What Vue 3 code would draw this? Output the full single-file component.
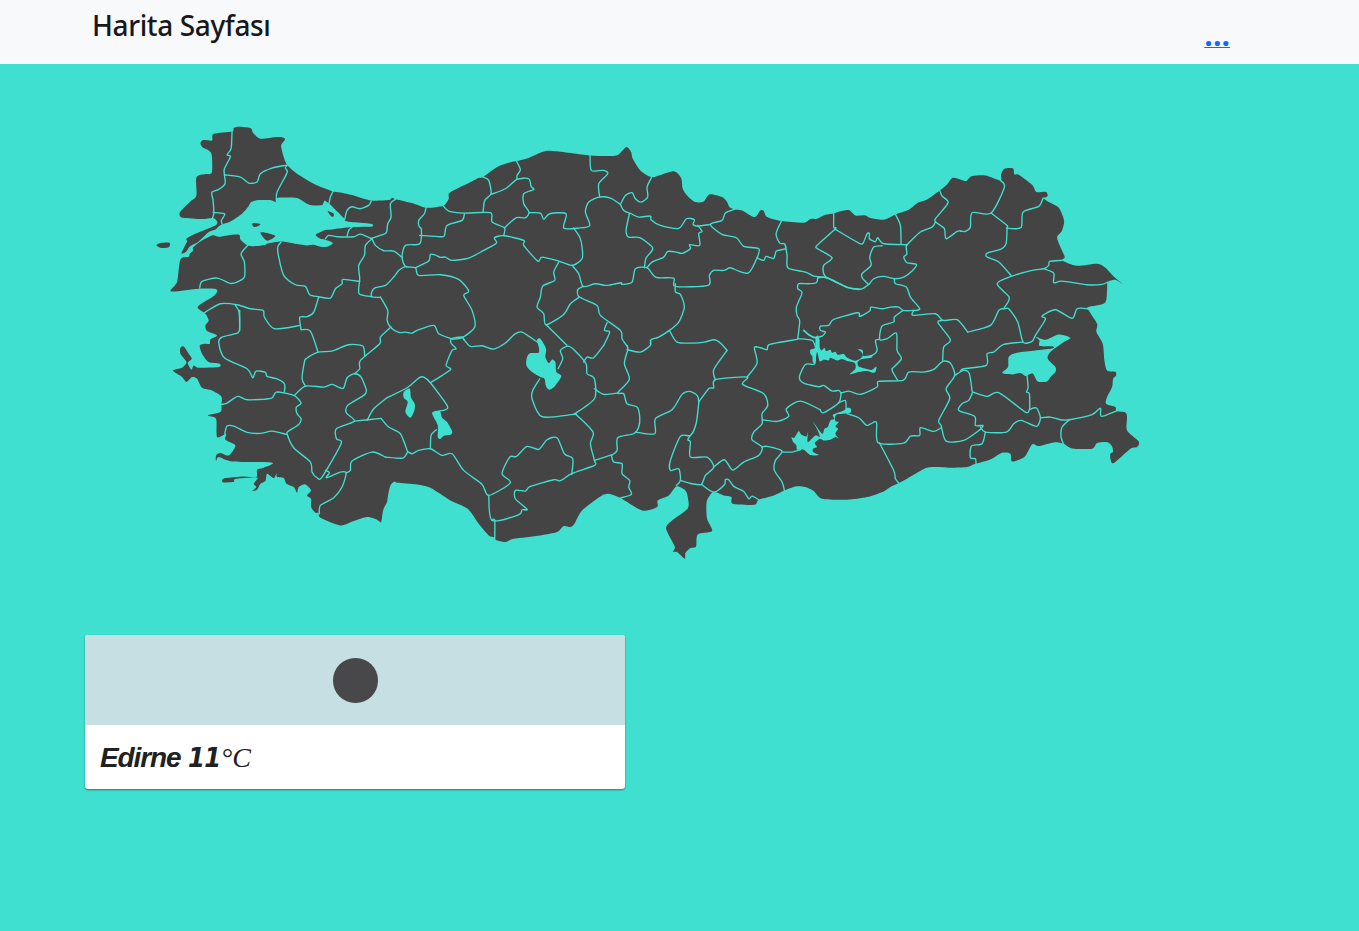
<script setup>
// Coordinates are stored per sheet: [originX, originY, "x y x y ..."] in thirds of a pixel.
const sheets = {
  a: [150, 115], b: [380, 130], c: [610, 130], d: [780, 150], e: [960, 150],
  f: [150, 310], g: [380, 310], h: [600, 310], i: [780, 320], j: [950, 310]
}

function points(key, text) {
  const [ox, oy] = sheets[key]
  const n = text.trim().split(/\s+/).map(Number)
  const out = []
  for (let k = 0; k < n.length; k += 2) out.push([ox + n[k] / 3, oy + n[k + 1] / 3])
  return out
}

function curve(pts, closed) {
  const t = 0.13
  const len = pts.length
  const at = (k) => (closed ? pts[(k + len) % len] : pts[Math.max(0, Math.min(len - 1, k))])
  const f = (v) => v.toFixed(2)
  let d = `M${f(pts[0][0])} ${f(pts[0][1])}`
  const end = closed ? len : len - 1
  for (let k = 0; k < end; k++) {
    const p0 = at(k - 1), p1 = at(k), p2 = at(k + 1), p3 = at(k + 2)
    d += `C${f(p1[0] + (p2[0] - p0[0]) * t)} ${f(p1[1] + (p2[1] - p0[1]) * t)} ${f(p2[0] - (p3[0] - p1[0]) * t)} ${f(p2[1] - (p3[1] - p1[1]) * t)} ${f(p2[0])} ${f(p2[1])}`
  }
  return closed ? d + 'Z' : d
}

const coast = [
  ['a', '245 48 250 38 265 34 300 38 308 52 330 70 380 65 402 68 402 76 392 90 400 125 410 148 440 175 490 205 520 218 547 228 570 231 610 240 662 255 715 254 725 247 735 252'],
  ['b', '48 207 95 218 137 232 188 226 205 205 208 187 265 158 295 143 308 140 350 110 385 97 408 92 440 84 490 63 520 62 627 75'],
  ['c', '0 77 25 72 48 50 62 65 67 85 90 120 123 140 155 132 192 123 212 142 217 175 230 195 255 215 280 213 297 192 335 200 350 215 357 230 372 237 395 240 432 260 450 240 460 242 470 260 513 272 580 277 600 266 620 265 645 253 670 249'],
  ['d', '175 184 205 179 225 195 255 195 270 203 310 208 345 192 385 178 412 157 440 147 478 120 500 102 518 82 555 92'],
  ['e', '20 90 35 77 75 75 120 90 122 72 132 55 158 54 162 72 175 73 215 103 228 125 255 124 262 133 258 140 248 143 265 155 295 172 311 210 305 240 290 260 298 285 313 320 305 330 350 346 410 340 435 352 460 378 487 401 465 388 442 395 440 420 433 458 383 470 385 480 410 520 408 545 427 580 432 630'],
  ['j', '470 180 495 184 497 195 488 205 485 230 470 260 467 280 495 290 498 302 525 306 530 320 530 360 565 393 560 410 540 415 490 458 480 445 480 430 488 425 485 408 470 395 440 398 425 415 365 414 340 400 310 396 265 407 245 402 222 440 185 453 180 430 155 427 120 447 75 460 50 470 0 472'],
  ['i', '455 440 430 446 380 475 355 488 330 500 310 513 260 530 200 538 125 535 100 512 75 500 45 498 12 510'],
  ['h', '520 555 475 568 462 583 397 580 393 560 370 555 340 544 325 560 318 580 320 625 335 662 292 672 287 708 270 713 255 728 253 745 230 725 218 724 223 708 197 654 215 630 262 594 262 560 255 540 228 528 205 555 172 570 170 590 125 600 60 563 25 550 0 555'],
  ['g', '685 550 660 558 605 600 582 640 570 650 550 647 530 665 480 675 400 685 375 695 345 688 340 680 325 675 295 640 262 595 210 570 150 532 110 522 50 517 43 513'],
  ['f', '720 525 712 560 710 575 698 600 692 635 680 628 650 620 610 632 570 645 510 622 505 608 495 607 482 590 482 565 470 555 482 540 465 522 445 530 440 547 430 530 408 520 400 503 380 500 378 490 370 503 350 490 345 512 330 520 320 538 305 542 318 530 310 520 320 502 255 506 250 514 220 516 215 510 225 503 280 498 318 500 320 478 340 472 365 457 245 453 205 440 197 452 197 435 210 428 235 435 255 405 225 388 227 370 200 380 197 325 172 315 210 305 213 282 213 258 185 240 155 232 140 205 125 200 108 215 95 200 68 182 75 177 95 172 108 155 90 130 90 112 100 108 115 130 124 145 112 158 123 178 130 165 145 172 205 170 208 160 175 155 155 130 148 105 165 100 178 100 180 87 200 75 170 62 165 45 175 30 165 10'],
  ['a', '142 574 192 540 198 522 145 520 62 528 80 500 90 432 115 424 118 415 128 406 128 396 150 378 185 360 205 364 232 360 266 358 270 372 292 390 318 392 345 388 352 384 395 378 440 386 470 390 490 388 510 394 530 394 547 384 540 378 522 372 510 370 496 358 525 344 545 342 605 335 660 334 668 330 660 325 600 320 583 315 580 308 540 268 527 258 522 256 515 269 490 270 470 265 440 248 400 246 380 248 376 260 360 254 325 254 302 260 295 272 275 295 240 318 212 328 195 342 175 350 145 378 118 393 108 408 93 414 104 390 110 378 108 370 130 357 180 337 198 328 200 318 188 308 155 311 98 307 88 300 90 288 120 258 138 240 138 186 165 176 184 172 184 118 172 103 158 97 150 84 158 74 182 76 186 72 190 55']
]
// The last two coast sheets share the cape at the western end of the gulf.
const land = curve(coast.flatMap(([k, t]) => points(k, t)).filter(([x, y], n, all) => n === 0 || x !== all[n - 1][0] || y !== all[n - 1][1]), true)

const islands = [
  ['a', '18 390 30 383 57 382 56 395 35 398'],
  ['a', '307 323 330 326 318 334 308 333'],
  ['a', '330 352 355 354 375 362 350 376'],
  ['a', '532 287 550 295 548 304 540 300']
].map(([k, t]) => curve(points(k, t), true))

const lakes = [
  ['j', '155 188 173 170 175 140 200 127 300 115 308 108 268 107 267 90 255 78 285 88 325 72 360 82 340 95 300 125 292 145 315 170 315 185 300 200 290 213 262 213 248 190 235 192 225 197 210 188 185 192'],
  ['g', '70 245 88 235 92 262 103 280 102 300 90 322 75 305 82 275 70 262'],
  ['g', '155 308 178 302 185 322 200 335 215 362 212 372 190 376 180 386 172 380 172 345'],
  ['g', '470 88 480 85 497 115 495 140 505 158 515 147 525 155 528 185 543 197 525 225 508 238 497 228 492 205 480 200 455 185 438 165 440 140 450 128 475 127 475 110'],
  ['i', '90 88 104 82 106 52 117 55 118 82 124 90 132 82 137 92 150 88 155 97 165 94 172 103 190 101 200 112 225 121 246 110 245 98 233 86 247 90 250 108 275 105 272 112 245 116 232 125 235 138 265 147 275 148 288 138 285 155 275 157 260 152 235 155 208 162 225 145 223 128 200 122 185 116 170 120 150 112 145 120 130 117 118 123 110 95 104 128 97 124 96 108 90 100'],
  ['i', '33 350 42 352 55 332 62 342 78 348 83 335 82 365 105 345 118 350 112 330 98 304 125 340 132 325 142 320 150 300 162 295 158 283 190 270 200 262 212 265 208 278 168 283 165 302 175 305 165 318 173 325 165 340 175 355 165 350 150 358 130 360 118 355 103 368 110 380 98 385 98 395 115 404 90 404 70 388 50 388 48 375 38 365']
].map(([k, t]) => curve(points(k, t), true))

const borderData = {
  a: [
    '245 48 242 100 230 118 240 124 222 160 222 178 224 205 205 222 184 231 188 255 190 295 186 308',
    '222 178 270 185 295 203 320 200 330 175 365 158 410 149',
    '410 149 405 158 410 172 380 230 378 258',
    '188 291 220 294 222 300 213 315 215 326',
    '548 228 540 245 535 268',
    '583 312 590 285 605 274 628 280 655 270 663 256',
    '735 252 720 265 722 305 712 325 708 352 690 360 665 368',
    '525 370 535 360 560 364 610 364 630 356 665 370',
    '605 335 595 345 590 362',
    '665 370 675 390 700 406 730 407 755 426',
    '665 370 645 390 642 420 625 450 628 490 626 535 665 544',
    '765 453 745 465 730 485 705 510 675 517 664 530 665 544 690 546',
    '292 390 272 415 282 440 282 485 260 500 240 504 200 488 155 498 148 518',
    '392 380 382 395 385 425 400 480 435 508 465 513 478 538 505 544 540 548 555 520 575 505 578 492 628 498',
    '505 544 490 590 470 604 448 606 452 642',
    '162 592 210 565 260 568 300 580 338 585 342 605 372 640 450 630',
    '255 570 266 590 268 645'
  ],
  b: [
    '137 232 132 250 115 270 116 288 123 297 118 340 75 345 65 380 75 408 105 412 115 435 180 433 235 447 265 482 250 495 275 540 283 590 245 622 215 626',
    '188 226 205 242 250 248 330 247 335 275 372 292 370 315',
    '118 315 180 319 192 316 200 285 245 270 252 250',
    '308 140 325 150 332 190 313 210 308 245',
    '332 192 375 175 410 147 445 145 452 168 460 177 430 190 430 220 446 245 435 262 408 262 372 292',
    '408 92 420 118 410 135 410 147',
    '446 247 480 248 490 267 508 250 557 250 550 293 595 293 628 285 615 245 625 215 655 200 690 203 720 222',
    '629 75 633 120 670 120 682 130 655 160 658 200',
    '105 412 145 392 150 372 165 374 180 381 195 380 215 390 265 383 310 360 348 338 342 322 370 316 430 330 430 345 472 392 485 380 535 392 575 405 605 385 605 350 598 320 580 293',
    '575 405 595 430 608 468 645 460 675 465 692 463',
    '608 468 592 478 597 500 650 525 660 555 720 600 725 625 742 650',
    '597 500 570 520 550 552 497 583 490 550 470 530 480 500 487 467 523 450 520 425 535 395',
    '497 583 560 645',
    '680 577 672 600 688 605 670 645',
    '0 500 22 540 20 570 32 592 55 606 75 605 95 608 110 600 160 585 175 610 215 626'
  ],
  c: [
    '123 142 110 170 112 200 92 215 75 205 65 187 45 195 30 222',
    '30 222 40 240 62 250 85 260 120 257 122 268 150 285 205 294 228 265 252 268 248 282 262 287 300 282',
    '372 237 345 248 335 270 300 282 335 312 378 322 400 348 445 355 440 382 415 427 385 422 360 412 340 420 310 420 297 435 293 465 195 468 190 443 137 441 110 412 75 415 65 455 35 462 32 457 2 463',
    '57 250 47 300 55 320 88 322 127 353 107 383 102 412',
    '110 412 125 395 160 380 172 363 198 365 215 369 240 355 238 343 268 345 265 310 275 303 262 285',
    '440 382 460 390 467 378 490 384 498 362 525 355 522 340 508 338 497 310 513 272',
    '525 345 530 375 533 413 585 425 610 437 650 443 712 472 750 476',
    '195 460 195 485 210 492 222 530 205 575 177 600 145 620 122 628 120 642',
    '177 600 200 635 250 638 282 635 312 628 330 638 350 660',
    '670 249 670 290 675 295 620 345 622 355 665 382 640 405 640 430 650 443',
    '622 443 618 457 595 460 565 460 562 475 575 487 558 530 560 555 568 572 562 625'
  ],
  d: [
    '165 237 235 278 248 278 260 250 267 250 267 265 285 274 292 262 310 280 380 283',
    '305 286 280 290 268 320 272 345 245 370 247 385 265 402',
    '345 192 360 225 362 282',
    '478 120 485 137 503 157 465 205 465 215 455 230 420 245 380 283 378 295 379 312 370 320 380 337 408 342 395 362 370 380 342 385 310 378 280 385 265 402 240 417 200 410 140 382 112 382',
    '342 385 345 400 378 410 390 440 418 475 400 480 368 480 355 470 330 470 305 475 272 470 268 482 238 498 232 487 160 507 145 525 120 527 120 540 135 545 125 557 105 562',
    '465 215 492 235 497 265 530 243 542 242',
    '400 480 398 495 465 490 487 510 530 508 562 545',
    '487 510 473 517 510 568 490 590 487 630',
    '368 480 342 500 340 515 305 527 298 567 320 565 348 548 350 600 363 625 335 655',
    '298 567 285 570 290 600 275 615 245 620',
    '52 565 95 570 105 590'
  ],
  e: [
    '120 90 132 110 92 188 35 187 30 230 15 243 0 242',
    '92 188 140 225 140 233 182 231 188 185 235 168 248 143',
    '140 233 137 280 120 297 80 308 80 320 115 335 152 375',
    '305 330 268 333 265 345 250 355 215 360 152 378 110 400 145 438 143 455 130 475 145 475 172 515 188 575 215 573 225 555 255 507 245 497 285 478 335 504 350 475 383 475',
    '250 355 280 368 280 397 305 392 380 403 425 402 442 395',
    '130 475 115 480 90 525 22 545',
    '188 575 130 582 100 605 80 610 78 645 10 655 0 662'
  ],
  f: [
    '268 0 267 60 255 70 215 80 205 95 222 142 290 175 307 202 317 182 345 186 350 198 378 205 402 220 402 245',
    '213 282 230 278 262 258 290 268 362 264 378 245 430 255 452 278 438 290 440 310 452 325 445 342 415 362 410 370 430 412 480 455 485 485 500 502 515 500 572 400 558 385 558 355 612 332 588 308 592 285 640 255 648 240 632 200 612 190 590 202 578 234 545 222 520 230 465 227 432 255',
    '465 227 455 205 462 155 467 145 503 125 545 122 595 103 637 107 643 137',
    '452 58 480 62 503 125',
    '722 50 690 80 688 100 630 150 628 175 612 190',
    '612 332 692 324',
    '650 330 670 295 710 262',
    '223 370 230 347 250 347 290 366 330 369 365 362 408 372',
    '525 480 537 487 528 502 570 485 587 488 575 530 550 562 510 585 507 610',
    '587 488 600 480 605 452 665 425 705 440'
  ],
  g: [
    '15 440 68 443 82 425 95 430 115 420 150 415 185 435 215 430 250 480 305 522 325 555 390 517 365 490 388 440 408 438 440 408 475 417 500 388 530 382 552 430 577 445 574 492',
    '325 555 335 630 415 613 425 598 440 597 405 565 405 540 435 542 450 528 520 508 540 511 574 490 642 465 642 450 630 400 638 365 590 315 580 312 485 319 455 265 457 240 478 205',
    '335 630 343 630 343 690',
    '2 324 25 350 60 370 82 425',
    '20 262 80 232 115 203 130 200 150 217 200 285 195 298 175 302',
    '150 217 210 178 197 165 215 120 227 115 213 100 213 85 245 80 252 90',
    '150 415 152 375 168 358',
    '580 312 642 265 642 205 620 190 617 160 583 120 563 107 540 120 547 145 533 175',
    '610 155 620 140 640 142 670 105',
    '712 248 670 252 642 235',
    '642 450 695 433',
    '245 80 270 108 305 106 340 116 375 98 402 72 425 65 475 98'
  ],
  h: [
    '80 118 120 125 150 105 150 90',
    '80 105 82 118 72 160 87 207 52 247 70 250 80 280 110 290 118 320 115 350 100 370 52 382 50 420 33 435',
    '105 365 163 370 165 325 215 298 245 252 268 243 290 255 295 275 287 340 270 375 240 378 210 450 210 480 235 475 240 510 228 525',
    '270 375 262 388 270 395 270 440 320 440 340 470 315 495 303 522 275 520 240 510',
    '303 522 340 545 372 523 375 508 385 508 400 528 430 543 445 565 455 557 475 568',
    '340 470 372 448 397 479 430 455 475 435 485 410 455 388 460 365 485 340 485 310 502 285 490 250 427 222 440 200 345 208 340 232 325 235 295 275',
    '440 200 470 158 462 112 480 112 500 118 508 102 590 87',
    '380 120 340 178 345 208',
    '485 328 530 333 565 318 558 295 600 272 660 298',
    '485 410 500 408 545 422 525 450 522 480 545 515 552 540',
    '545 425 575 425 600 418',
    '33 435 40 455 65 460 65 490 88 510 85 530 93 552 60 563'
  ],
  i: [
    '120 270 130 277 175 247 182 218',
    '175 247 195 240 197 265',
    '182 218 175 210 155 212 130 195 115 199 70 188 57 170 75 132 103 130 103 90',
    '182 218 205 212 240 222 290 200 295 183 368 180 385 155 430 155 460 147 487 123 510 128 523 165 497 205 508 235 475 300 482 315 497 362 550 360 600 327',
    '523 165 550 150 567 160 575 212',
    '335 145 337 155 352 180',
    '200 280 235 292 260 315 288 305 293 367 370 368 390 347 418 345 420 322 460 333 482 322',
    '297 367 340 450 345 475 357 490'
  ],
  j: [
    '90 357 98 345 75 345 73 318 25 300 35 280 55 270 67 245',
    '67 245 110 258 145 247 225 305 238 297 258 293 270 322 258 348 212 330 190 340 168 365 105 365 90 350',
    '105 365 95 400 63 407 60 442 75 445 77 462',
    '270 322 300 320 330 328 357 328 425 313 450 293 453 318 498 302',
    '357 328 335 350 332 380 340 402',
    '230 195 233 232 228 245 237 250 238 297'
  ]
}
const borders = Object.entries(borderData).flatMap(([k, list]) => list.map((t) => curve(points(k, t), false)))
const inlet = curve(points('d', '70 540 85 553 105 562 112 558'), false)
</script>

<template>
  <div class="page">
    <header class="bar">
      <h1 class="title">Harita Sayfası</h1>
      <a class="more" href="#">...</a>
    </header>
    <svg class="map" viewBox="-0.4 63.6 1359 571" width="1359" height="571">
      <path class="land" :d="land" />
      <path v-for="(d, n) in islands" :key="'s' + n" class="land" :d="d" />
      <path v-for="(d, n) in borders" :key="'b' + n" class="border" :d="d" />
      <path v-for="(d, n) in lakes" :key="'l' + n" class="lake" :d="d" />
      <path class="border inlet" :d="inlet" />
    </svg>
    <section class="card">
      <div class="cover"><span class="disc"></span></div>
      <div class="info">
        <span class="city">Edirne</span><span class="value">11</span><span class="unit">°C</span>
      </div>
    </section>
  </div>
</template>

<style>
body { background: #40e0d0; }
</style>

<style scoped>
.page { width: 100%; height: 931px; overflow: hidden; background: #40e0d0; }
.bar {
  display: flex; justify-content: space-between; align-items: flex-start;
  height: 64px; box-sizing: border-box; padding: 7px 129px 0 92px; background: #f8f9fa;
}
.title {
  margin: 0; color: #16181b; font: 500 28px/36px "Noto Sans", "Open Sans", sans-serif;
  letter-spacing: -0.38px; white-space: nowrap;
}
.more { margin-top: 11px; color: #0d6efd; font: 700 30px/34px "Open Sans", sans-serif; text-decoration-thickness: 1px; }
.map { display: block; }
.land { fill: #444; }
.border { fill: none; stroke: #40e0d0; stroke-width: 1.35; stroke-linejoin: round; stroke-linecap: round; }
.inlet { stroke-width: 1.8; }
.lake { fill: #40e0d0; }
.card {
  width: 540px; height: 154px; margin-left: 85px; border-radius: 3px; overflow: hidden;
  background: #fff; box-shadow: 0 1px 2px rgba(0, 0, 0, 0.45);
}
.cover { display: flex; align-items: center; justify-content: center; height: 90px; background: #c5dfe3; }
.disc { width: 44.5px; height: 44.5px; margin: 1px 0 0 1px; border-radius: 50%; background: #48484a; }
.info { display: flex; align-items: baseline; height: 64px; padding-left: 15px; line-height: 65px; color: #212121; font-size: 28px; font-style: italic; }
.city { width: 88px; font-family: "Liberation Sans", sans-serif; font-weight: 700; letter-spacing: -1.1px; }
.value { width: 33px; font-family: "DejaVu Sans Condensed", "DejaVu Sans", sans-serif; font-size: 27px; font-weight: 700; font-stretch: condensed; letter-spacing: -0.7px; }
.unit { font-family: "Liberation Serif", serif; }
</style>
